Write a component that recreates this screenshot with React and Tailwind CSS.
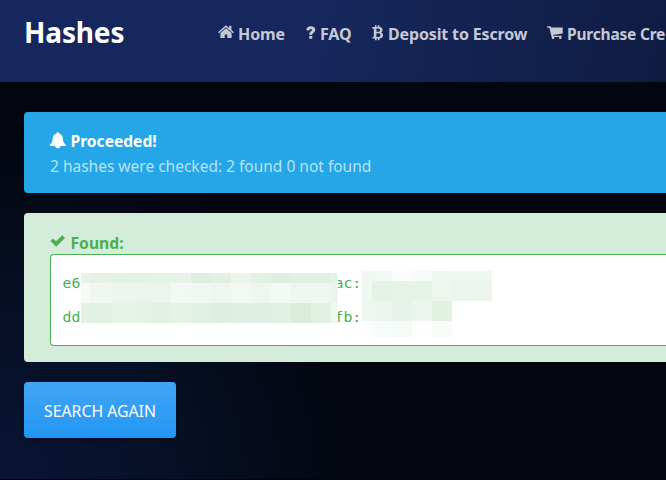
const hashTop = ['#e6f3e7','#e3f2e5','#e2f1e4','#e2f2e4','#e4f3e6','#e6f4e7','#dcefdd','#e0f1e2','#eaf5eb','#e3f1e5','#dcf0de','#e0f1e2','#e0f1e2','#e6f3e7'];
const hashMid = ['#f6fbf8','#f0f7f0','#ecf6ee','#ebf5ed','#ecf5ed','#f2f8f3','#f0f8f2','#edf6ef','#f2f8f4','#edf6ef','#f3f9f4','#eff6ee','#eff7f0','#eaf5ec'];
const hashLow = ['#e3f1e5','#e2f1e4','#e6f3e7','#e5f3e7','#e2f1e3','#e6f2e6','#e0f0e3','#ddeee1','#dfefe3','#ddefe2','#e0f0e3','#daeddb','#e2f1e4','#f1f8f3'];

const plainRows = [
  { h: 'h-[10px]', cells: ['#f0f8f3','#f2f9f4','#fbfdfb','#f6fbf7','#edf7ef','#f0f7f1','#eef7f0'] },
  { h: 'h-5', cells: ['#f1f8f4','#e5f3e6','#e8f3e8','#e8f3e8','#eef6ee','#ebf5ec','#ecf6ee'] },
  { h: 'h-5', cells: ['#edf7f0','#ecf6ee','#e7f3e8','#ecf6ee','#e1f2e3'] },
  { h: 'h-4', cells: ['#fefefe','#f6fcf9','#f4faf5','#fefefe','#f7fcf9'] },
];

function MosaicRow({ cells, className, last }) {
  return (
    <div className={`flex ${className}`}>
      {cells.map((c, i) => (
        <div
          key={i}
          className={i === 0 ? 'w-[10px] shrink-0' : last && i === cells.length - 1 ? 'w-[7px] shrink-0' : 'w-5 shrink-0'}
          style={{ backgroundColor: c }}
        />
      ))}
    </div>
  );
}

function HomeIcon() {
  return (
    <svg width="16" height="14" viewBox="0 0 16 14" fill="currentColor">
      <path d="M8 .3 0 7.200l1 1.100L8 2.300l7 6 1-1.100-2.600-2.300V.8h-2.200v2.300z" />
      <path d="M8 3.300 2.400 8.100V13h4.300V9.500h2.600V13h4.300V8.100z" />
    </svg>
  );
}
function QuestionIcon() {
  return (
    <svg width="10" height="14" viewBox="0 0 10 14" fill="currentColor">
      <path d="M.3 4.300C.4 1.600 2.100.2 4.800.2c2.700 0 4.500 1.300 4.500 3.600 0 1.500-.8 2.300-1.800 3C6.600 7.500 6.300 7.900 6.300 8.900H3.300c0-1.700.4-2.500 1.500-3.300.8-.6 1.100-.9 1.100-1.500 0-.7-.4-1.100-1.100-1.100-.8 0-1.200.5-1.300 1.500zM3.200 10h3.100v2.800H3.200z" />
    </svg>
  );
}
function BitcoinIcon() {
  return (
    <svg width="12" height="16" viewBox="0 0 12 16" fill="currentColor">
      <path fillRule="evenodd" d="M.3 2H3V.3h1.600V2h1.200V.3h1.600V2c2 .2 3.200 1.200 3.200 2.900 0 1.200-.6 2-1.600 2.500 1.300.4 2.100 1.400 2.100 2.800 0 2-1.300 3.200-3.700 3.400v1.700H5.800v-1.700H4.600v1.700H3v-1.700H.3v-1.400l1.500-.4V3.800L.3 3.500zM4.400 3.600v3.200h1.500c1.400 0 2.100-.5 2.100-1.600S7.300 3.600 5.900 3.600zm0 4.600v3.700h1.800c1.500 0 2.300-.6 2.300-1.900S7.700 8.200 6.100 8.200z" />
    </svg>
  );
}
function CartIcon() {
  return (
    <svg width="16" height="14" viewBox="0 0 16 14" fill="currentColor">
      <path d="M.2.2h3.300L4.300 1.500H15.700V7.600L6 9l.2.8h8.500v1.300h-.3v1.900h-2.200v-1.900H7.100v1.900H4.900v-1.900h-.3L2.400 1.700H.2z" />
    </svg>
  );
}
function BellIcon() {
  return (
    <svg width="16" height="17" viewBox="0 0 16 17" fill="currentColor">
      <path d="M7.700.2c.9 0 1.500.6 1.600 1.500 2 .6 3.300 2.100 3.500 4.300.3 3.300.5 4.700 2.900 6.600v1.300H10.500C10.200 15.500 9.200 16.300 7.800 16.300s-2.400-.8-2.700-2.400H0v-1.300c2.300-1.900 2.400-3.300 2.700-6.600.2-2.200 1.500-3.700 3.400-4.300C6.200.8 6.800.2 7.700.2z" />
    </svg>
  );
}
function CheckIcon() {
  return (
    <svg width="16" height="12" viewBox="0 0 16 12" fill="currentColor">
      <path d="M.4 6 2.900 3.400 6 6.200 12.300.2 15 2.900 6.200 11.700z" />
    </svg>
  );
}

function NavItem({ icon, label, className, text }) {
  return (
    <a className={`flex h-6 shrink-0 items-start whitespace-nowrap ${className}`}>
      {icon}
      <span className={`font-bold leading-6 ${text}`}>{label}</span>
    </a>
  );
}

export default function App() {
  return (
    <div className="flex h-[480px] w-[666px] flex-col overflow-hidden border-b border-[#02030c] bg-[#03060f] bg-[radial-gradient(ellipse_360px_350px_at_0px_480px,#081434_0%,#071027_45%,#03060f_100%)] font-['Noto_Sans','Open_Sans',sans-serif]">
      <header className="flex h-[82px] shrink-0 bg-[linear-gradient(100deg,#15275c_0%,#15275c_48%,#0f1c42_100%)] pl-6">
        <div className="mt-[12px] w-[194px] shrink-0 text-[28px] font-bold leading-10 tracking-[-0.15px] text-white">Hashes</div>
        <nav className="mt-[22px] flex text-[#c5c9d6]">
          <NavItem className="w-[88px]" text="text-[16px] tracking-[-0.1px]" label="Home" icon={<span className="mt-[3px] w-5"><HomeIcon /></span>} />
          <NavItem className="w-[66px]" text="text-[16px] tracking-[-0.1px]" label="FAQ" icon={<span className="mt-[4px] w-[14px]"><QuestionIcon /></span>} />
          <NavItem className="w-[175px]" text="text-[16px] tracking-[-0.15px]" label="Deposit to Escrow" icon={<span className="mt-[3px] w-4"><BitcoinIcon /></span>} />
          <NavItem className="" text="text-[15.500px] tracking-[-0.2px]" label="Purchase Credits" icon={<span className="mt-[4px] w-5"><CartIcon /></span>} />
        </nav>
      </header>

      <main className="flex flex-col pl-6 pt-[30px]">
        <section className="h-[81px] rounded-l-[4px] bg-[#25a6e6] pl-[26px] pt-[17px]">
          <div className="flex h-[25px] text-white">
            <span className="mt-[3px] w-[20.500px]"><BellIcon /></span>
            <strong className="text-[15.600px] leading-[25px]">Proceeded!</strong>
          </div>
          <p className="text-[15.500px] leading-[25px] text-[#b8e2f7]">2 hashes were checked: 2 found 0 not found</p>
        </section>

        <section className="mt-5 h-[149px] rounded-l-[4px] bg-[#d4ecda] pl-[26px] pt-[17px] text-[#4caf50]">
          <div className="flex h-6">
            <span className="mt-[5px] w-[20.500px]"><CheckIcon /></span>
            <strong className="text-[15.700px] leading-[27px]">Found:</strong>
          </div>
          <div className="relative h-[92px] rounded-l-[4px] border border-r-0 border-[#4caf50] bg-white pl-[11.500px] pt-[11px] font-['DejaVu_Sans_Mono',monospace] text-[14.800px] leading-[34px]">
            <div className="flex"><span className="w-[272px]">e6</span><span>ac:</span></div>
            <div className="flex"><span className="w-[272px]">dd</span><span>fb:</span></div>
            <div className="absolute left-[30px] top-[18px]">
              <MosaicRow cells={hashTop} className="h-[10px]" last />
              <MosaicRow cells={hashMid} className="h-5" last />
              <MosaicRow cells={hashLow} className="h-5" last />
            </div>
            <div className="absolute left-[311px] top-[16px]">
              {plainRows.map((r, i) => (
                <MosaicRow key={i} cells={r.cells} className={r.h} />
              ))}
            </div>
          </div>
        </section>

        <button className="mt-5 h-14 w-[152px] rounded-[4px] bg-linear-to-b from-[#42a5f5] to-[#2196f3] pt-1 text-[15.800px] text-white shadow-[0_1px_4px_rgba(0,0,0,0.4)]">SEARCH AGAIN</button>
      </main>
    </div>
  );
}
